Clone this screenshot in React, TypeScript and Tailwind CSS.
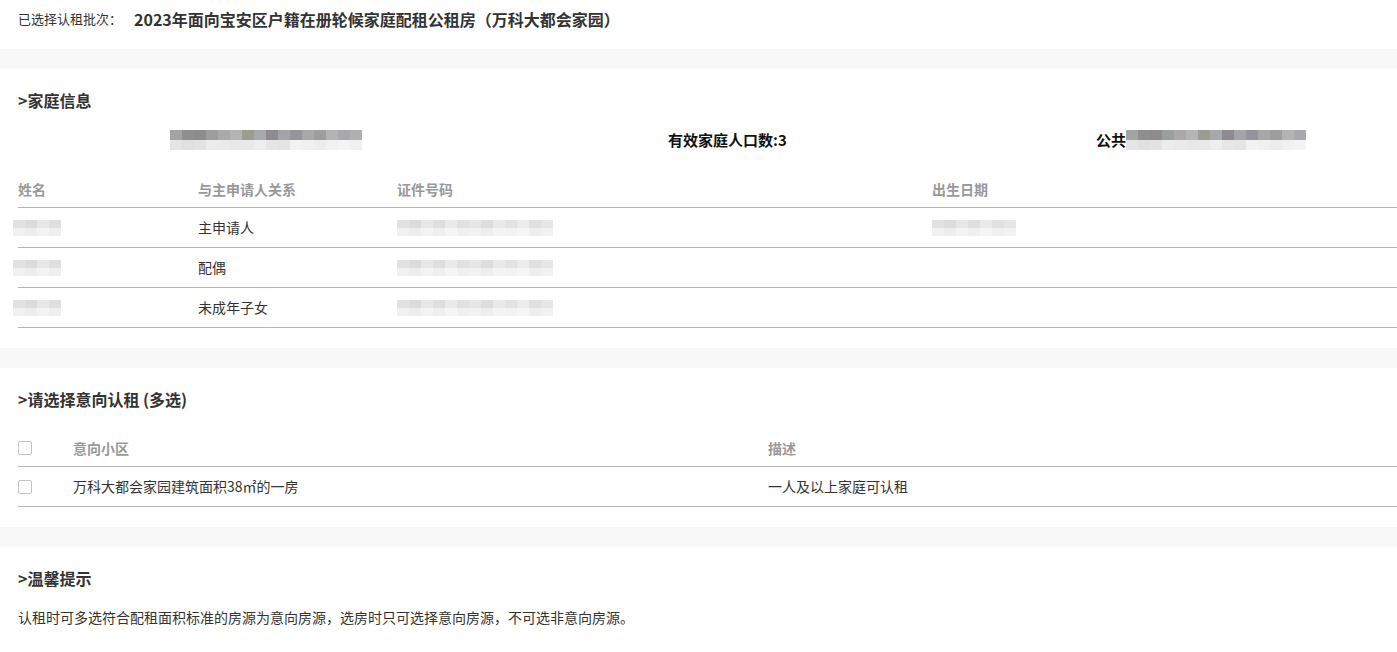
import React from "react";

const FONT = "font-['Microsoft_YaHei','Noto_Sans_CJK_SC',sans-serif]";

// pixelated "redacted" blocks
const darkTop = [
  "bg-[#a3a3a3]", "bg-[#8e8e8e]", "bg-[#8c8c8c]", "bg-[#9a9e9e]", "bg-[#a9a9a9]", "bg-[#b4b4b4]",
  "bg-[#9c9c90]", "bg-[#a5a9ac]", "bg-[#8b8b90]", "bg-[#a4a4a8]", "bg-[#94949a]", "bg-[#a8a8a8]",
  "bg-[#9d9d9d]", "bg-[#b3b3b3]", "bg-[#a9a9ad]", "bg-[#b0b0b0]",
];
const darkBottom = [
  "bg-[#e5e5e5]", "bg-[#e0e0e0]", "bg-[#e2e2e2]", "bg-[#ececec]", "bg-[#eaeaea]", "bg-[#e8e8e8]",
  "bg-[#e9e9e9]", "bg-[#eeeef0]", "bg-[#e6e6e6]", "bg-[#e4e4e4]", "bg-[#f2f2f2]", "bg-[#f0f0f0]",
  "bg-[#ececec]", "bg-[#f1f1f1]", "bg-[#f4f4f4]", "bg-[#f0f0f0]",
];
const lightTop = [
  "bg-[#dcdcdc]", "bg-[#d4d4d4]", "bg-[#e2e2e2]", "bg-[#d8d8d8]", "bg-[#e6e6e6]", "bg-[#dadada]",
  "bg-[#e0e0e0]", "bg-[#d6d6d6]", "bg-[#e4e4e4]", "bg-[#dddddd]", "bg-[#e8e8e8]", "bg-[#d9d9d9]",
  "bg-[#e1e1e1]",
];
const lightBottom = [
  "bg-[#eeeeee]", "bg-[#e9e9e9]", "bg-[#f1f1f1]", "bg-[#ececec]", "bg-[#f3f3f3]", "bg-[#ededed]",
  "bg-[#f0f0f0]", "bg-[#eaeaea]", "bg-[#f2f2f2]", "bg-[#efefef]", "bg-[#f4f4f4]", "bg-[#ebebeb]",
  "bg-[#f0f0f0]",
];

function Mosaic({ n, dark = false, rowH = "h-[10px]" }: { n: number; dark?: boolean; rowH?: string }) {
  const top = dark ? darkTop : lightTop;
  const bottom = dark ? darkBottom : lightBottom;
  return (
    <div className="flex flex-col">
      <div className="flex">
        {Array.from({ length: n }).map((_, i) => (
          <span key={i} className={`w-[12px] ${rowH} ${top[i % top.length]}`} />
        ))}
      </div>
      <div className="flex">
        {Array.from({ length: n }).map((_, i) => (
          <span key={i} className={`w-[12px] ${rowH} ${bottom[i % bottom.length]}`} />
        ))}
      </div>
    </div>
  );
}

function Band() {
  return <div className="h-[20px] bg-[#f8f8f8]" />;
}

function Heading({ children }: { children: React.ReactNode }) {
  return <h2 className="h-[20px] text-[16px] font-semibold leading-[20px] text-[#333]">{children}</h2>;
}

function Checkbox() {
  return <span className="block h-[14px] w-[14px] rounded-[2px] border border-[#c4c4c4] bg-white" />;
}

const members = [
  { rel: "主申请人", birth: true },
  { rel: "配偶", birth: false },
  { rel: "未成年子女", birth: false },
];

export default function App() {
  return (
    <div className={`${FONT} min-h-[652px] bg-white text-[#333]`}>
      <div className="flex h-[49px] items-start gap-[12px] pl-[18px] pt-[9px]">
        <span className="text-[13px] leading-[20px]">已选择认租批次：</span>
        <span className="text-[16px] font-bold leading-[20px] text-[#333]">
          2023年面向宝安区户籍在册轮候家庭配租公租房（万科大都会家园）
        </span>
      </div>
      <Band />

      <section className="pb-[20px] pl-[18px] pt-[21px]">
        <Heading>&gt;家庭信息</Heading>
        <div className="mt-[15px] grid h-[30px] grid-cols-[650px_428px_1fr] items-center text-[15px] font-bold text-[#111]">
          <div className="pl-[152px]">
            <Mosaic n={16} dark />
          </div>
          <div>有效家庭人口数:3</div>
          <div className="flex items-center">
            <span>公共</span>
            <Mosaic n={15} dark />
          </div>
        </div>

        <div className="mt-[16px] text-[14px]">
          <div className="grid h-[37px] grid-cols-[180px_199px_535px_1fr] items-center border-b border-[#b4b4b4] font-semibold text-[#999]">
            <span>姓名</span>
            <span>与主申请人关系</span>
            <span>证件号码</span>
            <span>出生日期</span>
          </div>
          {members.map((m, i) => (
            <div
              key={i}
              className="grid h-[40px] grid-cols-[180px_199px_535px_1fr] items-center border-b border-[#b4b4b4]"
            >
              <div className="-ml-[5px] opacity-80">
                <Mosaic n={4} rowH="h-[8px]" />
              </div>
              <span>{m.rel}</span>
              <div className="opacity-80">
                <Mosaic n={13} rowH="h-[8px]" />
              </div>
              <div className="opacity-80">{m.birth ? <Mosaic n={7} rowH="h-[8px]" /> : null}</div>
            </div>
          ))}
        </div>
      </section>
      <Band />

      <section className="pb-[20px] pl-[18px] pt-[21px]">
        <Heading>&gt;请选择意向认租 (多选)</Heading>
        <div className="mt-[21px] text-[14px]">
          <div className="grid h-[37px] grid-cols-[55px_695px_1fr] items-center border-b border-[#b4b4b4] font-semibold text-[#999]">
            <Checkbox />
            <span>意向小区</span>
            <span>描述</span>
          </div>
          <div className="grid h-[40px] grid-cols-[55px_695px_1fr] items-center border-b border-[#b4b4b4]">
            <Checkbox />
            <span>万科大都会家园建筑面积38㎡的一房</span>
            <span>一人及以上家庭可认租</span>
          </div>
        </div>
      </section>
      <Band />

      <section className="pl-[18px] pt-[21px]">
        <Heading>&gt;温馨提示</Heading>
        <p className="mt-[19px] text-[14px] leading-[20px]">
          认租时可多选符合配租面积标准的房源为意向房源，选房时只可选择意向房源，不可选非意向房源。
        </p>
      </section>
    </div>
  );
}
